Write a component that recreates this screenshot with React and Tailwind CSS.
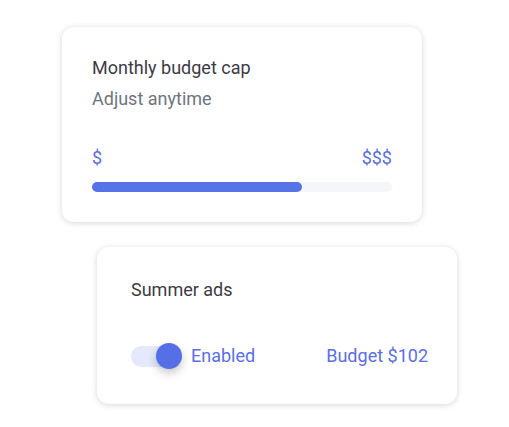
export default function App() {
  return (
    <div className="min-h-screen bg-white font-['Roboto',sans-serif] overflow-hidden">
      {/* Budget cap card */}
      <div className="ml-[62px] pt-[27px]">
        <div className="w-[360px] rounded-xl bg-white px-[30px] pt-[29px] pb-[30px] shadow-[0_1px_6px_rgba(0,0,0,0.16)]">
          <div className="text-[18px] leading-6 text-[#3b3b44]">Monthly budget cap</div>
          <div className="mt-[7px] text-[18px] leading-6 text-[#70747e]">Adjust anytime</div>
          <div className="mt-[35px] flex justify-between text-[18px] leading-6 text-[#5b6ee4]">
            <span>$</span>
            <span>$$$</span>
          </div>
          <div className="mt-[12px] h-[10px] rounded-full bg-[#f4f6fa]">
            <div className="h-full w-[70%] rounded-full bg-[#5673e8]" />
          </div>
        </div>
      </div>

      {/* Campaign card */}
      <div className="ml-[97px] mt-[25px]">
        <div className="w-[360px] rounded-xl bg-white pt-[31px] pb-[36px] pl-[34px] pr-[29px] shadow-[0_1px_6px_rgba(0,0,0,0.16)]">
          <div className="text-[18px] leading-6 text-[#3b3b44]">Summer ads</div>
          <div className="mt-[42px] flex items-center justify-between">
            <div className="flex items-center">
              <div className="relative h-[21px] w-[46px] rounded-full bg-[#e4e9fb]">
                <div className="absolute right-[-5px] top-[-2.5px] h-[26px] w-[26px] rounded-full bg-[#5570e6] shadow-[0_4px_10px_rgba(0,0,0,0.22)]" />
              </div>
              <span className="ml-[14px] text-[18px] leading-6 text-[#5b6ee4]">Enabled</span>
            </div>
            <span className="text-[18px] leading-6 text-[#5b6ee4]">Budget $102</span>
          </div>
        </div>
      </div>
    </div>
  )
}
